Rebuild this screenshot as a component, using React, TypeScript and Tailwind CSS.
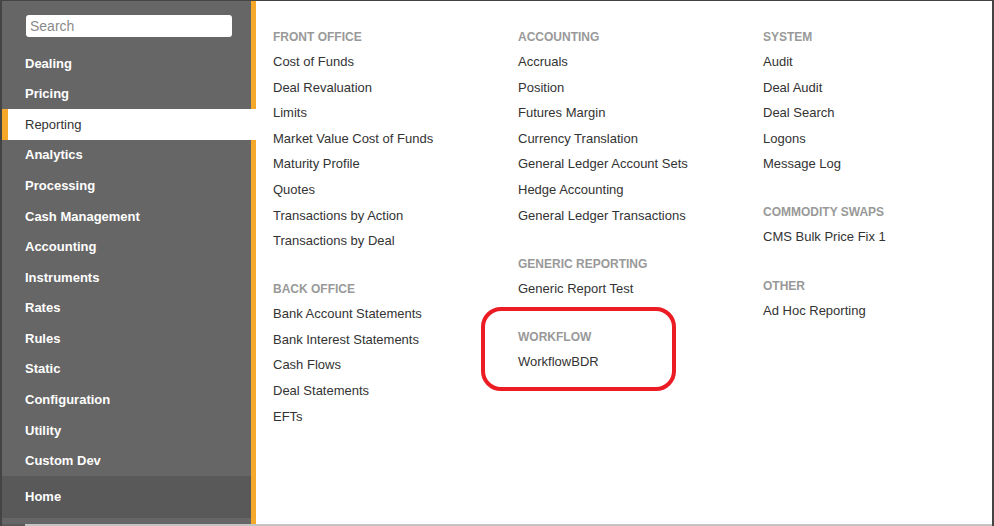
import React from "react";

const navItems = [
  "Dealing",
  "Pricing",
  "Reporting",
  "Analytics",
  "Processing",
  "Cash Management",
  "Accounting",
  "Instruments",
  "Rates",
  "Rules",
  "Static",
  "Configuration",
  "Utility",
  "Custom Dev",
];

interface Section {
  title: string;
  items: string[];
}

const columns: Section[][] = [
  [
    {
      title: "Front Office",
      items: [
        "Cost of Funds",
        "Deal Revaluation",
        "Limits",
        "Market Value Cost of Funds",
        "Maturity Profile",
        "Quotes",
        "Transactions by Action",
        "Transactions by Deal",
      ],
    },
    {
      title: "Back Office",
      items: [
        "Bank Account Statements",
        "Bank Interest Statements",
        "Cash Flows",
        "Deal Statements",
        "EFTs",
      ],
    },
  ],
  [
    {
      title: "Accounting",
      items: [
        "Accruals",
        "Position",
        "Futures Margin",
        "Currency Translation",
        "General Ledger Account Sets",
        "Hedge Accounting",
        "General Ledger Transactions",
      ],
    },
    { title: "Generic Reporting", items: ["Generic Report Test"] },
    { title: "Workflow", items: ["WorkflowBDR"] },
  ],
  [
    {
      title: "System",
      items: ["Audit", "Deal Audit", "Deal Search", "Logons", "Message Log"],
    },
    { title: "Commodity Swaps", items: ["CMS Bulk Price Fix 1"] },
    { title: "Other", items: ["Ad Hoc Reporting"] },
  ],
];

export default function App() {
  const active = "Reporting";

  return (
    <div className="w-[994px] h-[526px] flex flex-col overflow-hidden bg-white border-t border-l-2 border-r-2 border-[#444] font-['Liberation_Sans',Arial,sans-serif]">
      <div className="flex flex-1 min-h-0">
        {/* sidebar */}
        <div className="w-[254px] shrink-0 flex flex-col bg-[#666] border-r-[5px] border-[#f5a82a]">
          <div className="pt-[13px] pb-[10px] pl-6 pr-[19px]">
            <input
              placeholder="Search"
              className="w-full h-[22px] rounded-[3px] bg-white px-1 text-[14px] text-[#333] placeholder:text-[#8a8a8a] outline-none"
            />
          </div>
          <ul className="flex flex-col">
            {navItems.map((item) =>
              item === active ? (
                <li
                  key={item}
                  className="h-[30.6px] mr-[-5px] flex items-center bg-white border-l-[6px] border-[#f5a82a] pl-[17px] text-[13px] text-[#333]"
                >
                  {item}
                </li>
              ) : (
                <li
                  key={item}
                  className="h-[30.6px] flex items-center pl-[23px] text-[13px] font-bold text-white"
                >
                  {item}
                </li>
              )
            )}
          </ul>
          <div className="mt-auto mb-[6px] h-[42px] flex items-center bg-[#595959] pl-[23px] text-[13px] font-bold text-white">
            Home
          </div>
        </div>

        {/* menu content */}
        <div className="relative flex-1 flex pl-[17px] pt-[24px]">
          {columns.map((sections, i) => (
            <div key={i} className="w-[245px] flex flex-col gap-[23.5px]">
              {sections.map((s) => (
                <div key={s.title}>
                  <h3 className="leading-[24px] text-[12px] font-bold uppercase text-[#999]">
                    {s.title}
                  </h3>
                  <ul>
                    {s.items.map((it) => (
                      <li
                        key={it}
                        className="leading-[25.6px] text-[13px] text-[#333]"
                      >
                        {it}
                      </li>
                    ))}
                  </ul>
                </div>
              ))}
            </div>
          ))}

          {/* red highlight annotation */}
          <div className="absolute left-[225px] top-[306px] w-[195px] h-[84px] rounded-[20px] border-4 border-[#ec1c24]" />
        </div>
      </div>
      <div className="h-[2px] flex">
        <div className="w-[23px] bg-[#5a5a5a]" />
        <div className="flex-1 bg-[#c4c4c4]" />
      </div>
    </div>
  );
}
